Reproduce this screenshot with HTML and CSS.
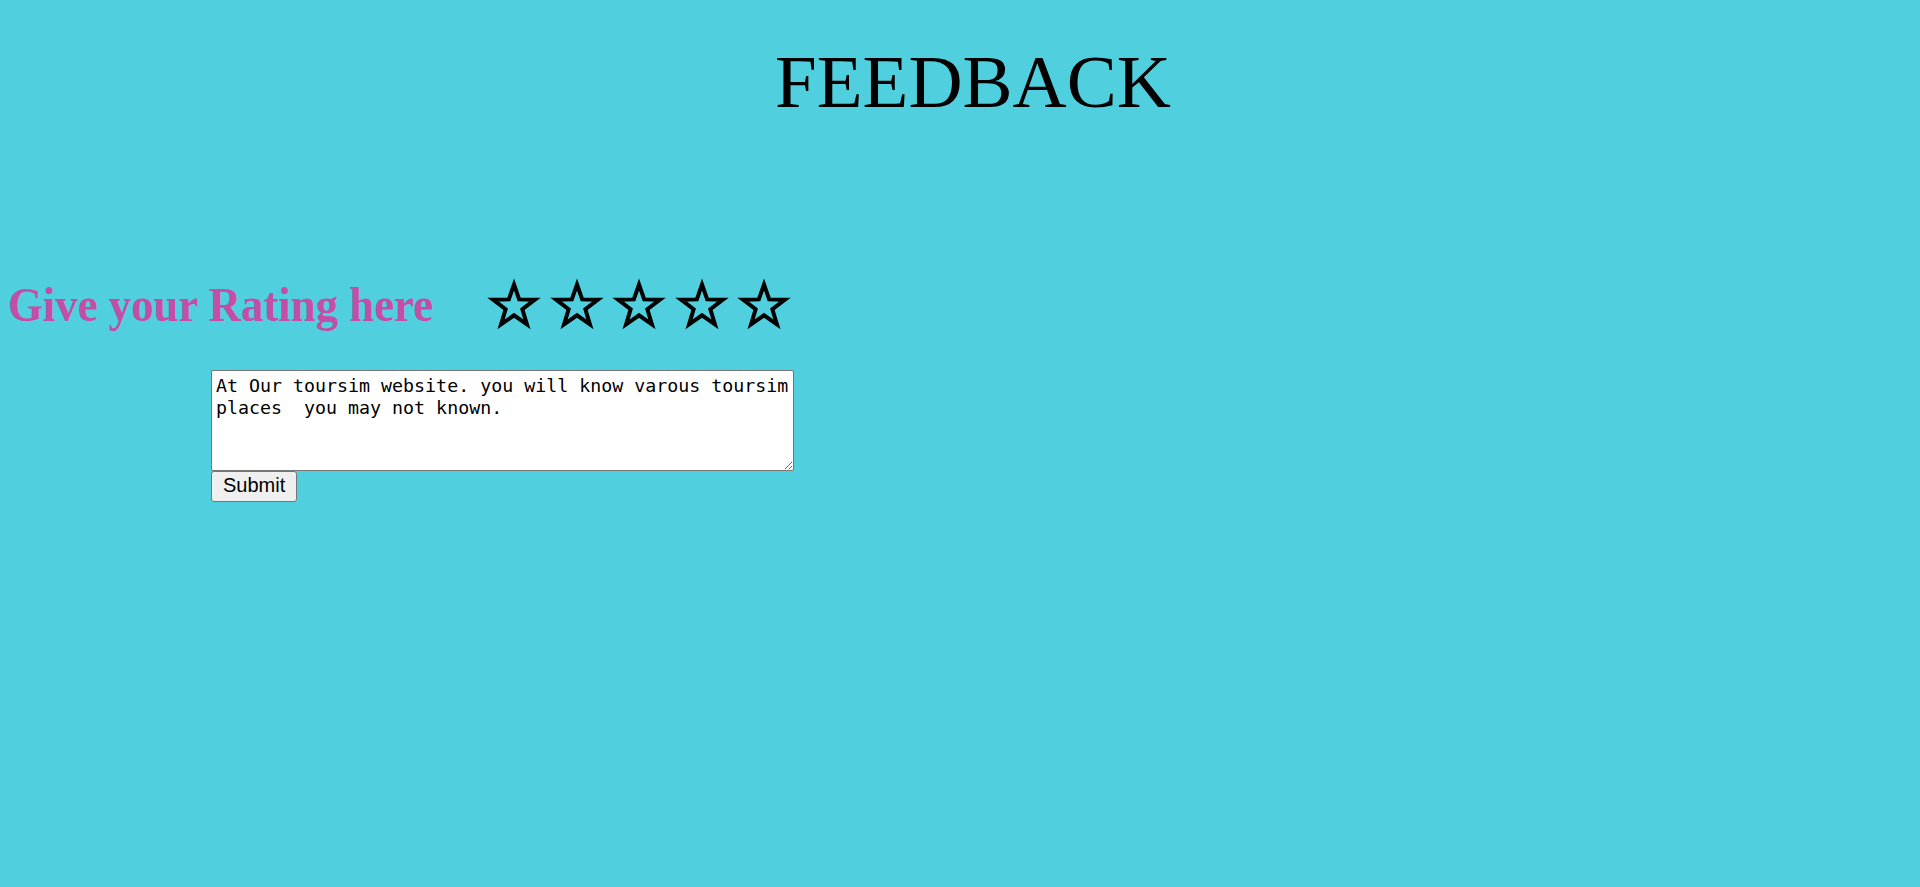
FILE: index.html
```html
<!DOCTYPE html>
<html lang="en">
<head>
<meta charset="utf-8">
<title>Feedback</title>
<link rel="stylesheet" href="styles.css">
</head>
<body>
<h1 class="title">FEEDBACK</h1>
<div class="rating-row">
  <div class="rating-label"><h2 class="rating-text">Give your Rating here</h2></div>
  <div class="stars" aria-label="☆☆☆☆☆">
    <svg class="star" viewBox="0 0 54 53" width="54" height="53"><polygon points="27,6.5 32.17,21.38 47.92,21.7 35.37,31.22 39.93,46.3 27,37.3 14.07,46.3 18.63,31.22 6.08,21.7 21.83,21.38"/></svg>
    <svg class="star" viewBox="0 0 54 53" width="54" height="53"><polygon points="27,6.5 32.17,21.38 47.92,21.7 35.37,31.22 39.93,46.3 27,37.3 14.07,46.3 18.63,31.22 6.08,21.7 21.83,21.38"/></svg>
    <svg class="star" viewBox="0 0 54 53" width="54" height="53"><polygon points="27,6.5 32.17,21.38 47.92,21.7 35.37,31.22 39.93,46.3 27,37.3 14.07,46.3 18.63,31.22 6.08,21.7 21.83,21.38"/></svg>
    <svg class="star" viewBox="0 0 54 53" width="54" height="53"><polygon points="27,6.5 32.17,21.38 47.92,21.7 35.37,31.22 39.93,46.3 27,37.3 14.07,46.3 18.63,31.22 6.08,21.7 21.83,21.38"/></svg>
    <svg class="star" viewBox="0 0 54 53" width="54" height="53"><polygon points="27,6.5 32.17,21.38 47.92,21.7 35.37,31.22 39.93,46.3 27,37.3 14.07,46.3 18.63,31.22 6.08,21.7 21.83,21.38"/></svg>
  </div>
</div>
<form class="feedback-form">
  <textarea class="feedback-text">At Our toursim website. you will know varous toursim places  you may not known.</textarea>
  <button type="button" class="submit-btn">Submit</button>
</form>
</body>
</html>
```
FILE: styles.css
```css
html, body {
  margin: 0;
  padding: 0;
}
body {
  background: #50d0de;
  min-height: 887px;
  font-family: "Liberation Serif", "Times New Roman", serif;
}
.title {
  margin: 0;
  padding: 44px 0 0 26px;
  font-size: 75px;
  line-height: 75px;
  font-weight: normal;
  text-align: center;
  color: #000;
}
.rating-row {
  display: flex;
  align-items: center;
  margin-top: 159px;
  padding-left: 8px;
}
.rating-label {
  flex: 0 0 479px;
  height: 48px;
}
.rating-text {
  margin: 0;
  font-size: 48px;
  line-height: 48px;
  font-weight: bold;
  color: #c44da5;
  white-space: nowrap;
  transform: scaleX(0.933);
  transform-origin: left center;
}
.stars {
  display: flex;
  gap: 8.5px;
}
.star {
  display: block;
}
.star polygon {
  fill: none;
  stroke: #000;
  stroke-width: 4;
  stroke-linejoin: miter;
  stroke-miterlimit: 10;
}
.feedback-form {
  display: flex;
  flex-direction: column;
  align-items: flex-start;
  margin: 39px 0 0;
  padding-left: 211px;
}
.feedback-text {
  box-sizing: border-box;
  width: 583px;
  height: 101px;
  margin: 0;
  padding: 4px 2px 3px 4px;
  border: 1px solid #767676;
  border-radius: 2px;
  background: #fff;
  color: #000;
  font-family: "DejaVu Sans Mono", monospace;
  font-size: 18.3px;
  line-height: 22px;
}
.submit-btn {
  box-sizing: border-box;
  margin: 0;
  height: 31px;
  padding: 2px 11px 4px;
  border: 1px solid #767676;
  border-radius: 3px;
  background: #efefef;
  color: #000;
  font-family: "Liberation Sans", Arial, sans-serif;
  font-size: 20px;
  line-height: 23px;
}
```
